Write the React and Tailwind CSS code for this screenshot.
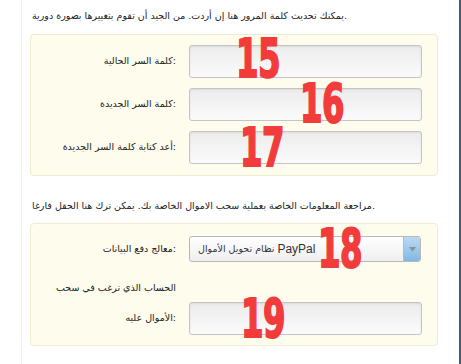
import React from "react";

const arab = { fontFamily: '"DejaVu Sans", "Noto Sans", sans-serif' };

function Num({ children, left, top }) {
  return (
    <div
      className="absolute text-[54px] leading-none font-bold text-[#f23b3b] origin-top-left scale-x-[0.6] tracking-[-1px] pointer-events-none [-webkit-text-stroke:2px_#f23b3b]"
      style={{ left, top, fontFamily: '"DejaVu Sans", sans-serif' }}
    >
      {children}
    </div>
  );
}

function Input() {
  return (
    <div className="w-[233px] h-[33px] rounded-[3px] border border-[#c4c4c4] bg-gradient-to-b from-[#ececec] to-[#fbfbfb] shadow-[inset_0_1px_2px_rgba(0,0,0,0.08)]" />
  );
}

function Row({ label, className = "" }) {
  return (
    <div className={"flex items-center " + className}>
      <div dir="ltr" className="w-[145px] text-right text-[9.5px] text-[#222]" style={arab}>
        {label}
      </div>
      <div className="ml-[13px]">
        <Input />
      </div>
    </div>
  );
}

export default function App() {
  return (
    <div className="relative w-[461px] h-[364px] bg-white overflow-hidden">
      <div className="absolute left-[21px] top-0 h-full w-px bg-[#f2f2f2]" />
      <div className="absolute right-0 top-0 h-full w-[2px] bg-[#3f5d76]" />
      <div className="pl-[30px] w-[438px]">
        <div dir="ltr" className="pt-[8px] pl-[2px] h-[34px] text-[9.5px] leading-[16px] text-[#222]" style={arab}>
          يمكنك تحديث كلمة المرور هنا إن أردت. من الجيد أن تقوم بتغييرها بصورة دورية.
        </div>
        <div className="w-[408px] h-[142px] rounded-[4px] border border-[#efebcf] bg-[#fefcec] pt-[10px] flex flex-col gap-[10px]">
          <Row label="كلمة السر الحالية:" />
          <Row label="كلمة السر الجديدة:" />
          <Row label="أعد كتابة كلمة السر الجديدة:" />
        </div>
        <div dir="ltr" className="pt-[22px] pl-[2px] h-[47px] text-[9.5px] leading-[16px] text-[#222]" style={arab}>
          مراجعة المعلومات الخاصة بعملية سحب الاموال الخاصة بك. يمكن ترك هنا الحقل فارغا.
        </div>
        <div className="w-[408px] h-[123px] rounded-[4px] border border-[#efebcf] bg-[#fefcec] pt-[12px]">
          <div className="flex items-center">
            <div dir="ltr" className="w-[145px] text-right text-[9.5px] text-[#222]" style={arab}>
              معالج دفع البيانات:
            </div>
            <div className="ml-[13px] w-[232px] h-[26px] rounded-[3px] border border-[#b8b8b8] bg-gradient-to-b from-[#ffffff] to-[#efefef] flex items-stretch overflow-hidden">
              <div dir="ltr" className="flex-1 flex items-center pl-[8px] text-[#333] whitespace-nowrap" style={arab}>
                <span className="text-[9.5px]">نظام تحويل الأموال</span>
                <span className="ml-[3px] text-[12px]" style={{ fontFamily: '"Liberation Sans", Arial, sans-serif' }}>PayPal</span>
              </div>
              <div className="w-[17px] border-l border-[#9cc0df] bg-gradient-to-b from-[#b9daf3] to-[#82b8e4] flex items-center justify-center">
                <svg width="7" height="5" viewBox="0 0 7 5"><path d="M0 0H7L3.5 4.5Z" fill="#8a9199" /></svg>
              </div>
            </div>
          </div>
          <div className="mt-[17px]">
            <div dir="ltr" className="w-[145px] text-right text-[9.5px] leading-[18px] text-[#222]" style={arab}>
              الحساب الذي ترغب في سحب
            </div>
            <Row label="الأموال عليه:" className="mt-[5px]" />
          </div>
        </div>
      </div>
      <Num left={236} top={32}>15</Num>
      <Num left={300} top={77}>16</Num>
      <Num left={240} top={121}>17</Num>
      <Num left={318} top={222}>18</Num>
      <Num left={241} top={292}>19</Num>
    </div>
  );
}
